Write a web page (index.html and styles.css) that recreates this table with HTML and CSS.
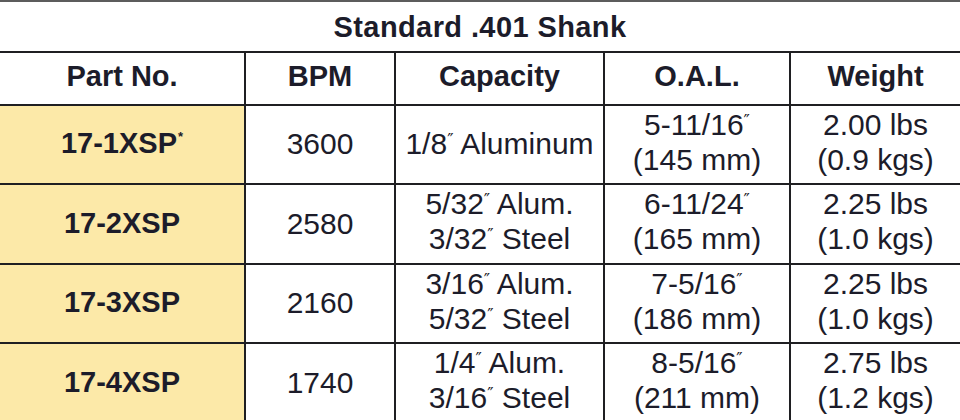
FILE: index.html
```html
<!DOCTYPE html>
<html>
<head>
<meta charset="utf-8">
<link rel="stylesheet" href="styles.css">
</head>
<body>
<div class="table">
  <div class="cell title"><span>Standard .401 Shank</span></div>

  <div class="cell head"><span>Part No.</span></div>
  <div class="cell head"><span>BPM</span></div>
  <div class="cell head"><span>Capacity</span></div>
  <div class="cell head"><span>O.A.L.</span></div>
  <div class="cell head"><span>Weight</span></div>

  <div class="cell part"><span>17-1XSP<sup class="ast">*</sup></span></div>
  <div class="cell"><span>3600</span></div>
  <div class="cell"><span>1/8<span class="in">″</span> Aluminum</span></div>
  <div class="cell two"><span>5-11/16<span class="in">″</span><br>(145 mm)</span></div>
  <div class="cell two"><span>2.00 lbs<br>(0.9 kgs)</span></div>

  <div class="cell part"><span>17-2XSP</span></div>
  <div class="cell"><span>2580</span></div>
  <div class="cell two"><span>5/32<span class="in">″</span> Alum.<br>3/32<span class="in">″</span> Steel</span></div>
  <div class="cell two"><span>6-11/24<span class="in">″</span><br>(165 mm)</span></div>
  <div class="cell two"><span>2.25 lbs<br>(1.0 kgs)</span></div>

  <div class="cell part"><span>17-3XSP</span></div>
  <div class="cell"><span>2160</span></div>
  <div class="cell two"><span>3/16<span class="in">″</span> Alum.<br>5/32<span class="in">″</span> Steel</span></div>
  <div class="cell two"><span>7-5/16<span class="in">″</span><br>(186 mm)</span></div>
  <div class="cell two"><span>2.25 lbs<br>(1.0 kgs)</span></div>

  <div class="cell part"><span>17-4XSP</span></div>
  <div class="cell"><span>1740</span></div>
  <div class="cell two"><span>1/4<span class="in">″</span> Alum.<br>3/16<span class="in">″</span> Steel</span></div>
  <div class="cell two"><span>8-5/16<span class="in">″</span><br>(211 mm)</span></div>
  <div class="cell two"><span>2.75 lbs<br>(1.2 kgs)</span></div>
</div>
</body>
</html>
```

FILE: styles.css
```css
html, body {
  margin: 0;
  padding: 0;
  background: #ffffff;
}

body {
  width: 960px;
  height: 420px;
  overflow: hidden;
  font-family: "Liberation Sans", Arial, Helvetica, sans-serif;
  color: #1c1c2a;
}

.table {
  display: grid;
  grid-template-columns: 244px 148px 207px 184px 169px;
  grid-template-rows: 49px 51px 77px 78px 77px 78px;
  gap: 2px;
  background: #1f1f22;
  border-top: 2px solid #5c5c5c;
}

.cell {
  background: #ffffff;
  display: flex;
  align-items: center;
  justify-content: center;
  text-align: center;
  font-size: 30px;
  line-height: 35px;
  white-space: nowrap;
  padding-bottom: 2px;
}

.two {
  padding-bottom: 6px;
}

.title {
  grid-column: 1 / -1;
  font-size: 29px;
  font-weight: bold;
  letter-spacing: 0.4px;
  padding-top: 1px;
  padding-bottom: 0;
}

.head {
  font-size: 29px;
  font-weight: bold;
  padding-bottom: 4px;
}

.part {
  font-size: 29px;
  font-weight: bold;
  background: #fce9a8;
}

.ast {
  font-size: 13px;
  line-height: 0;
  vertical-align: 12px;
  margin-left: 1px;
}

.in {
  font-family: "DejaVu Sans", sans-serif;
  font-size: 17px;
  vertical-align: 8px;
  line-height: 0;
}
```
